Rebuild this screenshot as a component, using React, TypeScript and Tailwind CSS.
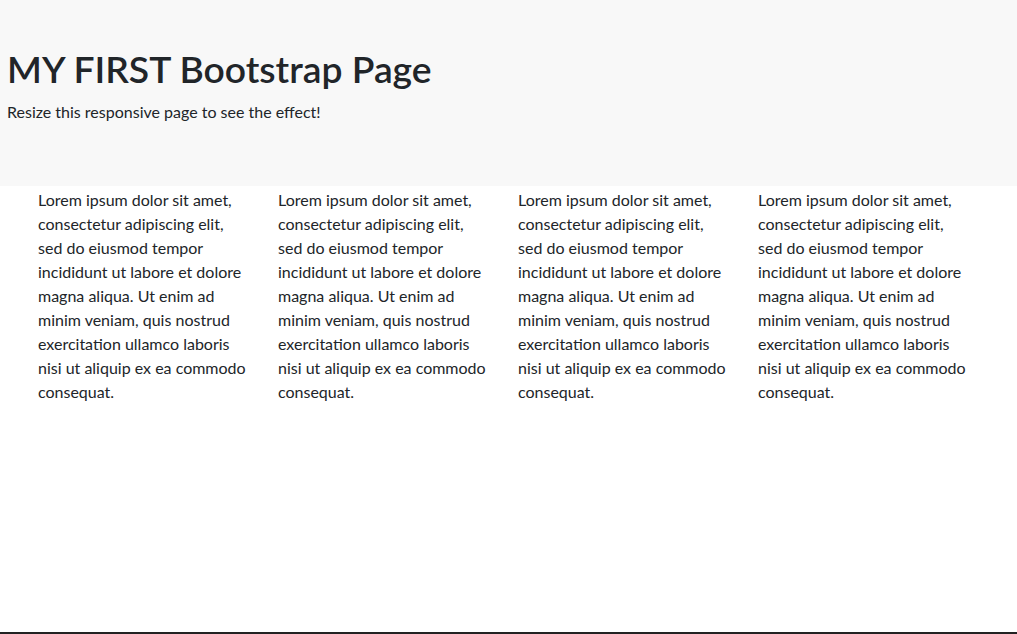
const lorem =
  "Lorem ipsum dolor sit amet, consectetur adipiscing elit, sed do eiusmod tempor incididunt ut labore et dolore magna aliqua. Ut enim ad minim veniam, quis nostrud exercitation ullamco laboris nisi ut aliquip ex ea commodo consequat.";

export default function App() {
  return (
    <div className="min-h-screen flex flex-col bg-white text-[#212529] font-['Lato',sans-serif]">
      {/* jumbotron */}
      <div className="bg-[#f8f8f8] h-[186px] px-[7px] pt-[47px]">
        <h1 className="text-[37.25px] leading-[1.2] font-semibold mb-2">MY FIRST Bootstrap Page</h1>
        <p className="text-base leading-6">Resize this responsive page to see the effect!</p>
      </div>

      <div className="pl-[24px] pt-[2px] grid grid-cols-[repeat(4,240px)]">
        {[0, 1, 2, 3].map((i) => (
          <div key={i} className="px-[14px]">
            <p className="text-base leading-6">{lorem}</p>
          </div>
        ))}
      </div>

      <div className="flex-1" />
      <div className="h-[2px] bg-[#222]" />
    </div>
  );
}
